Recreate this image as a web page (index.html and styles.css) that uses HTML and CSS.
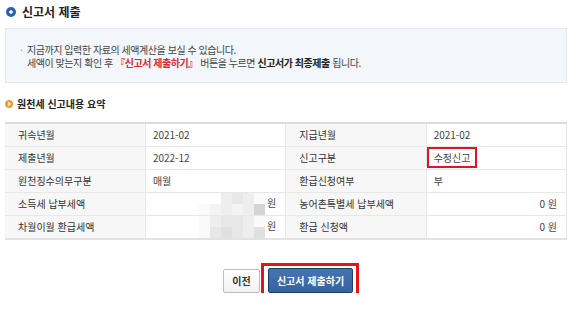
FILE: index.html
```html
<!DOCTYPE html>
<html lang="ko">
  <head>
    <meta charset="UTF-8" />
    <meta name="viewport" content="width=device-width, initial-scale=1.0" />
    <title>신고서 제출</title>
    <link rel="stylesheet" href="styles.css">
  </head>
  <body>
    <div class="page">
      <h1 class="page-title"><span class="icon-blue"><svg width="10" height="10" viewBox="0 0 10 10"><circle cx="5" cy="5" r="5" fill="#2b63b0"/><path d="M3 5h4M5 3v4" stroke="#fff" stroke-width="1.4"/></svg></span>신고서 제출</h1>

      <div class="notice">
        <p><span class="dot">·</span>지금까지 입력한 자료의 세액계산을 보실 수 있습니다.</p>
        <p>세액이 맞는지 확인 후 <em>『신고서 제출하기』</em> 버튼을 누르면 <strong>신고서가 최종제출</strong> 됩니다.</p>
      </div>

      <h2 class="sub-title"><span class="icon-orange"><svg width="8" height="8" viewBox="0 0 8 8"><circle cx="4" cy="4" r="4" fill="#f0a030"/><path d="M3.2 2.4L4.8 4 3.2 5.6" stroke="#fff" stroke-width="1.2" fill="none"/></svg></span>원천세 신고내용 요약</h2>

      <table class="summary">
        <tbody>
          <tr>
            <th>귀속년월</th>
            <td>2021-02</td>
            <th>지급년월</th>
            <td>2021-02</td>
          </tr>
          <tr>
            <th>제출년월</th>
            <td>2022-12</td>
            <th>신고구분</th>
            <td><span class="hl">수정신고</span></td>
          </tr>
          <tr>
            <th>원천징수의무구분</th>
            <td>매월</td>
            <th>환급신청여부</th>
            <td>부</td>
          </tr>
          <tr>
            <th>소득세 납부세액</th>
            <td class="amount">
              <span class="mosaic">
                <i></i><i></i><i class="s3"></i><i class="s4"></i><i class="s3"></i><i class="s1"></i>
                <i class="s1"></i><i class="s2"></i><i class="s3"></i><i class="s2"></i><i class="s3"></i><i class="s6"></i>
              </span>원
            </td>
            <th>농어촌특별세 납부세액</th>
            <td class="amount">0 원</td>
          </tr>
          <tr>
            <th>차월이월 환급세액</th>
            <td class="amount">
              <span class="mosaic">
                <i class="s1"></i><i class="s3"></i><i class="s4"></i><i class="s4"></i><i class="s3"></i><i class="s1"></i>
                <i class="s1"></i><i class="s4"></i><i class="s5"></i><i class="s4"></i><i class="s3"></i><i class="s5"></i>
              </span>원
            </td>
            <th>환급 신청액</th>
            <td class="amount">0 원</td>
          </tr>
        </tbody>
      </table>

      <div class="actions">
        <button class="btn btn-prev">이전</button>
        <span class="mark"><button class="btn btn-submit">신고서 제출하기</button></span>
      </div>
    </div>
  </body>
</html>
```

FILE: styles.css
```css
body {
  margin: 0;
  font-family: "Noto Sans CJK KR", "Noto Sans", sans-serif;
  color: #333;
  background-color: #fff;
}
.page {
  padding: 4px 13px 0 5px;
}
.page-title {
  margin: 0 0 8px;
  padding-left: 1px;
  font-size: 12px;
  line-height: 16px;
  font-weight: bold;
  color: #222;
  display: flex;
  align-items: center;
  gap: 6px;
}
.page-title svg,
.sub-title svg {
  display: block;
}
.notice {
  border: 1px solid #e4e8ef;
  background-color: #f3f6fb;
  padding: 14px 10px 13px 21px;
  font-size: 10px;
  line-height: 13px;
  letter-spacing: -0.45px;
  color: #444;
}
.notice p {
  margin: 0;
}
.notice .dot {
  display: inline-block;
  width: 7px;
  margin-left: -7px;
  color: #999;
}
.notice em {
  font-style: normal;
  font-weight: bold;
  color: #e0282e;
}
.notice strong {
  color: #222;
}
.sub-title {
  margin: 14px 0 11px;
  font-size: 10px;
  line-height: 14px;
  font-weight: bold;
  color: #222;
  display: flex;
  align-items: center;
  gap: 4px;
}
.summary {
  width: 100%;
  table-layout: fixed;
  border-collapse: collapse;
  border-top: 2px solid #dcdcdc;
  border-bottom: 2px solid #e2e2e2;
  font-size: 10px;
}
.summary th,
.summary td {
  height: 22px;
  padding: 0;
  line-height: 12px;
  border-bottom: 1px solid #e8e8e8;
  text-align: left;
  white-space: nowrap;
}
.summary th {
  padding-left: 13px;
  font-weight: normal;
  background-color: #f7f7f7;
  color: #333;
}
.summary td {
  padding-left: 7px;
  color: #444;
  border-left: 1px solid #e8e8e8;
  border-right: 1px solid #e8e8e8;
}
.summary td.amount {
  text-align: right;
  padding-right: 9px;
}
.mosaic {
  display: inline-grid;
  grid-template-columns: repeat(6, 11px);
  grid-auto-rows: 11px;
  vertical-align: middle;
  margin-right: 2px;
}
.mosaic i {
  display: block;
}
.mosaic .s1 { background-color: #fafafa; }
.mosaic .s2 { background-color: #f4f4f4; }
.mosaic .s3 { background-color: #eeeeee; }
.mosaic .s4 { background-color: #e7e7e7; }
.mosaic .s5 { background-color: #e0e0e0; }
.mosaic .s6 { background-color: #d4d4d4; }
.hl {
  position: relative;
}
.hl::after {
  content: "";
  position: absolute;
  top: -3px;
  bottom: -3px;
  left: -7px;
  right: -7px;
  border: 2px solid #e5141b;
}
.actions {
  margin-top: 28px;
  padding-left: 4px;
  display: flex;
  justify-content: center;
  align-items: center;
  gap: 8px;
}
.btn {
  font-family: "Noto Sans CJK KR", "Noto Sans", sans-serif;
  font-size: 10px;
  font-weight: bold;
  border-radius: 2px;
  padding: 0;
  cursor: pointer;
}
.btn-prev {
  width: 37px;
  height: 24px;
  border: 1px solid #bdbdbd;
  background: linear-gradient(#ffffff, #f2f2f2);
  color: #333;
}
.btn-submit {
  width: 85px;
  height: 25px;
  border: 1px solid #1f3c66;
  background: linear-gradient(#4674b3, #3762a0);
  color: #fff;
}
.mark {
  position: relative;
  display: flex;
}
.mark::after {
  content: "";
  position: absolute;
  top: -5px;
  bottom: -5px;
  left: -7px;
  right: -6px;
  border: 3px solid #e5141b;
}
```
